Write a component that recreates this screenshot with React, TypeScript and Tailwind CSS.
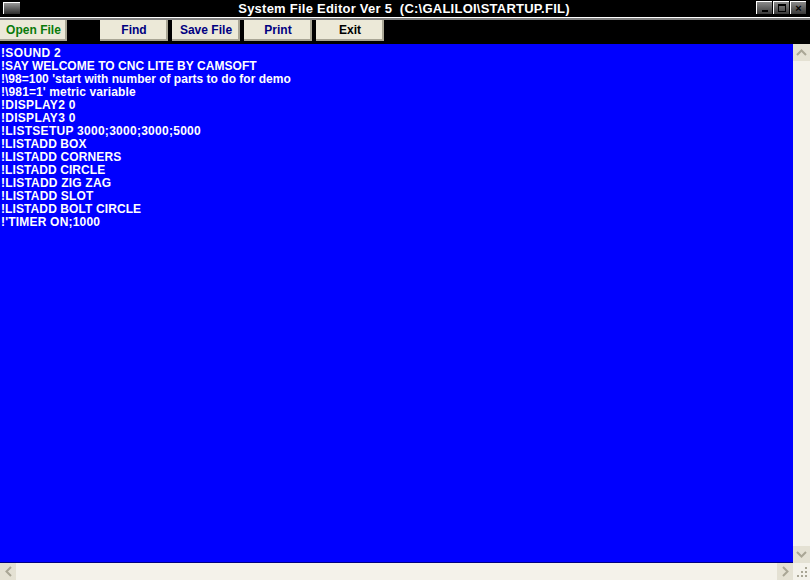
const lines: [string, string][] = [
  ["!SOUND 2", "tracking-[0.35px]"],
  ["!SAY WELCOME TO CNC LITE BY CAMSOFT", "tracking-[0.04px]"],
  ["!\\98=100 'start with number of parts to do for demo", "tracking-[0.01px]"],
  ["!\\981=1' metric variable", "tracking-[0.12px]"],
  ["!DISPLAY2 0", "tracking-[0.28px]"],
  ["!DISPLAY3 0", "tracking-[0.28px]"],
  ["!LISTSETUP 3000;3000;3000;5000", "tracking-[0.27px]"],
  ["!LISTADD BOX", "tracking-[0.1px]"],
  ["!LISTADD CORNERS", "tracking-[0.12px]"],
  ["!LISTADD CIRCLE", "tracking-[0.08px]"],
  ["!LISTADD ZIG ZAG", "tracking-[0.2px]"],
  ["!LISTADD SLOT", "tracking-[0.15px]"],
  ["!LISTADD BOLT CIRCLE", "tracking-[0.1px]"],
  ["!'TIMER ON;1000", "tracking-[0.2px]"],
];

function WinBtn({ children }: { children: React.ReactNode }) {
  return (
    <div className="w-[16px] h-[13px] flex items-center justify-center bg-gradient-to-b from-[#8a8a8a] to-[#3a3a3a] border-t border-l border-white">
      {children}
    </div>
  );
}

function ToolBtn({ label, w, color, ml }: { label: string; w: string; color: string; ml: string }) {
  return (
    <div
      className={`${w} ${ml} ${color} h-[21px] bg-[#ece9d8] border-r-2 border-b-2 border-[#a9a695] flex items-center justify-center pl-[2px] text-[12px] font-bold tracking-[0.02px]`}
    >
      {label}
    </div>
  );
}

export default function App() {
  return (
    <div className="w-[810px] h-[580px] flex flex-col overflow-hidden bg-black font-['Liberation_Sans',Arial,sans-serif]">
      <div className="h-[17px] flex items-center relative shrink-0">
        <div className="ml-[3px] mt-[-1px] w-[17px] h-[12px] bg-gradient-to-b from-[#9a9a9a] to-[#2e2e2e] border-t border-l border-white" />
        <div className="flex-1 flex justify-center">
          <span className="text-white text-[13px] font-bold tracking-[0.24px] whitespace-pre ml-[32px]">
            {"System File Editor Ver 5  (C:\\GALILOI\\STARTUP.FIL)"}
          </span>
        </div>
        <div className="flex gap-[1px] mr-[4px] mt-[-2px]">
          <WinBtn>
            <div className="w-[6px] h-[2px] bg-black mt-[5px]" />
          </WinBtn>
          <WinBtn>
            <div className="w-[8px] h-[8px] border border-black border-t-2" />
          </WinBtn>
          <WinBtn>
            <span className="text-black text-[11px] font-bold leading-none">×</span>
          </WinBtn>
        </div>
      </div>
      <div className="h-[1px] bg-white shrink-0" />
      <div className="h-[2px] bg-[#808080] shrink-0" />
      <div className="h-[24px] flex items-start shrink-0">
        <ToolBtn label="Open File" w="w-[67px]" color="text-[#0a7a0a]" ml="ml-0" />
        <ToolBtn label="Find" w="w-[68px]" color="text-[#000080]" ml="ml-[33px]" />
        <ToolBtn label="Save File" w="w-[68px]" color="text-[#000080]" ml="ml-[4px]" />
        <ToolBtn label="Print" w="w-[68px]" color="text-[#000080]" ml="ml-[4px]" />
        <ToolBtn label="Exit" w="w-[68px]" color="text-black" ml="ml-[4px]" />
      </div>
      <div className="flex-1 flex min-h-0">
        <div className="flex-1 bg-[#0000ff] border-b border-[#000080] pt-[3px] pl-[1px] text-white text-[12px] font-bold leading-[13px]">
          {lines.map(([text, tracking]) => (
            <div key={text} className={`h-[13px] whitespace-pre ${tracking}`}>
              {text}
            </div>
          ))}
        </div>
        <div className="w-[17px] bg-[#f4f2ea] flex flex-col justify-between">
          <div className="h-[17px] bg-[#e4e1d3] flex items-center justify-center">
            <svg width="11" height="7" viewBox="0 0 11 7">
              <path d="M1 6 L5.5 1.5 L10 6" fill="none" stroke="#a9a695" strokeWidth="2" />
            </svg>
          </div>
          <div className="h-[17px] bg-[#e4e1d3] flex items-center justify-center">
            <svg width="11" height="7" viewBox="0 0 11 7">
              <path d="M1 1 L5.5 5.5 L10 1" fill="none" stroke="#a9a695" strokeWidth="2" />
            </svg>
          </div>
        </div>
      </div>
      <div className="h-[17px] flex bg-[#f4f2ea] shrink-0">
        <div className="w-[16px] bg-[#e4e1d3] flex items-center justify-center">
          <svg width="7" height="11" viewBox="0 0 7 11">
            <path d="M6 1 L1.5 5.5 L6 10" fill="none" stroke="#a9a695" strokeWidth="2" />
          </svg>
        </div>
        <div className="flex-1" />
        <div className="w-[16px] bg-[#e4e1d3] flex items-center justify-center">
          <svg width="7" height="11" viewBox="0 0 7 11">
            <path d="M1 1 L5.5 5.5 L1 10" fill="none" stroke="#a9a695" strokeWidth="2" />
          </svg>
        </div>
        <div className="w-[17px] flex items-end justify-end p-[2px]">
          <svg width="12" height="12" viewBox="0 0 12 12" fill="#a9a695">
            <rect x="9" y="1" width="2" height="2" />
            <rect x="5" y="5" width="2" height="2" />
            <rect x="9" y="5" width="2" height="2" />
            <rect x="1" y="9" width="2" height="2" />
            <rect x="5" y="9" width="2" height="2" />
            <rect x="9" y="9" width="2" height="2" />
          </svg>
        </div>
      </div>
    </div>
  );
}
